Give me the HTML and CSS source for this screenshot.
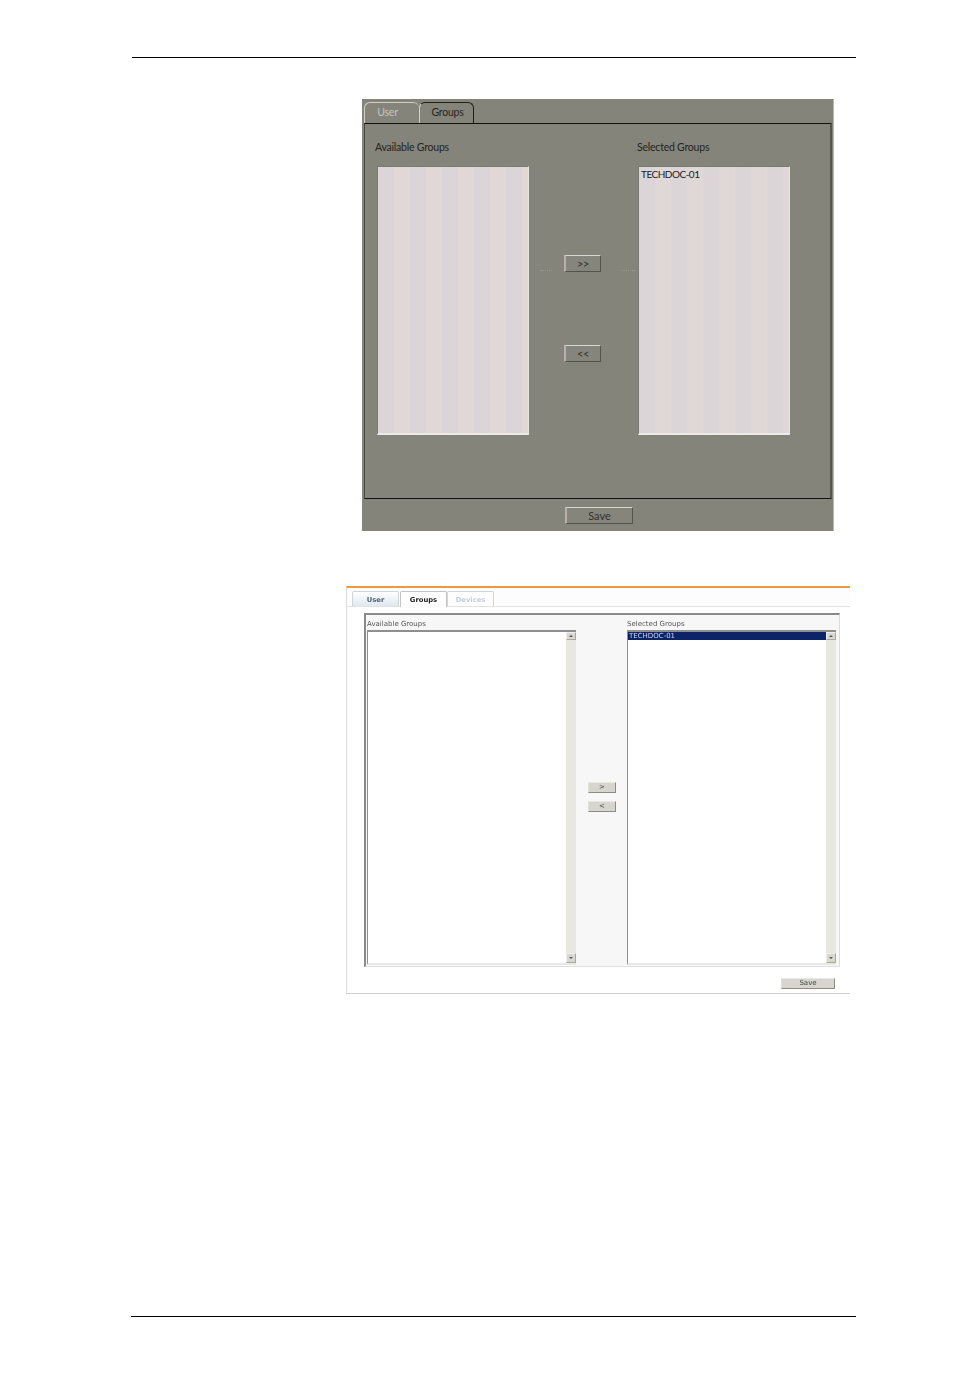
FILE: index.html
```
<!DOCTYPE html>
<html lang="en">
<head>
<meta charset="utf-8">
<title>Groups</title>
<link rel="stylesheet" href="styles.css">
</head>
<body>
<div class="page">
  <hr class="rule rule-top">

  <section class="old">
    <div class="old-tabs">
      <div class="old-tab old-tab-user">User</div>
      <div class="old-tab old-tab-groups">Groups</div>
    </div>
    <div class="old-frame">
      <div class="old-col old-col-left">
        <div class="old-label">Available Groups</div>
        <div class="old-list"></div>
      </div>
      <div class="old-moves">
        <button class="old-btn old-btn-add">&gt;&gt;</button>
        <button class="old-btn">&lt;&lt;</button>
      </div>
      <div class="old-col old-col-right">
        <div class="old-label">Selected Groups</div>
        <div class="old-list">TECHDOC-01</div>
      </div>
    </div>
    <div class="old-foot"><button class="old-btn old-save">Save</button></div>
  </section>

  <section class="new">
    <div class="new-tabs">
      <div class="new-tab new-tab-user">User</div>
      <div class="new-tab new-tab-groups">Groups</div>
      <div class="new-tab new-tab-devices">Devices</div>
    </div>
    <div class="new-frame">
      <div class="new-col">
        <div class="new-label">Available Groups</div>
        <div class="new-list">
          <div class="new-items"></div>
          <div class="sb"><span class="sb-btn sb-up"></span><span class="sb-btn sb-down"></span></div>
        </div>
      </div>
      <div class="new-moves">
        <button class="new-btn">&gt;</button>
        <button class="new-btn">&lt;</button>
      </div>
      <div class="new-col">
        <div class="new-label">Selected Groups</div>
        <div class="new-list">
          <div class="new-items"><div class="new-item-selected">TECHDOC-01</div></div>
          <div class="sb"><span class="sb-btn sb-up"></span><span class="sb-btn sb-down"></span></div>
        </div>
      </div>
    </div>
    <div class="new-foot"><button class="new-btn new-save">Save</button></div>
  </section>

  <hr class="rule rule-bottom">
</div>
</body>
</html>
```
FILE: styles.css
```
* { box-sizing: border-box; }
html, body { margin: 0; padding: 0; background: #fff; }
.page {
  width: 954px; height: 1384px; padding: 57px 98px 67px 131px;
  display: flex; flex-direction: column; overflow: hidden;
  font-family: "Liberation Sans", Arial, sans-serif;
}
.rule { border: 0; height: 1px; margin: 0; background: #000; flex: none; }
.rule-top { margin-left: 1px; }
.rule-bottom { margin-top: auto; }

/* Scanned dark dialog */
.old {
  flex: none; width: 472px; height: 432px; margin: 41px 0 0 231px;
  background: #84847a; color: #24241f; font-family: Lato, "Liberation Sans", sans-serif;
  font-size: 10.5px; letter-spacing: -0.22px;
  border-right: 1px solid #b9b9b2;
}
.old-tabs { display: flex; height: 24px; padding: 3px 0 0 2px; align-items: flex-end; }
.old-tab {
  height: 21px; padding-top: 3px; text-align: center; border-radius: 6px 6px 0 0;
  font-size: 10.5px;
}
.old-tab-user { width: 55px; padding-right: 9px; color: #c5c5bd; border: 1px solid #cfcfc8; border-bottom: 0; border-right: 0; }
.old-tab-groups { width: 55px; padding-left: 2px; color: #26261f; border: 1px solid #1e1e1a; border-bottom: 0; border-left-color: #d2d2cc; }
.old-frame {
  height: 376px; margin: 0 1px 0 2px; padding: 15px 0 0 10px;
  display: flex; border: 1px solid #111; border-left-color: #4a4840; border-right: 2px solid #5a544e;
}
.old-col { flex: none; }
.old-col-left { width: 154px; }
.old-col-right { width: 154px; }
.old-label { height: 27px; line-height: 17px; }
.old-list {
  width: 152px; height: 269px; margin-left: 2px; padding: 1px 2px 0;
  font-size: 10px; line-height: 13px; color: #1a1a1a; letter-spacing: -0.5px;
  border: 1px solid #7c7872; border-bottom: 2px solid #eeeae8; border-right-color: #e8e4e2;
  background: repeating-linear-gradient(90deg, #dcd5d8 0, #dcd5d8 16px, #dfd8d7 16px, #dfd8d7 32px);
}
.old-col-right .old-list { margin-left: 1px; }
.old-moves {
  flex: none; width: 108px; padding: 116px 0 0 35px;
  display: flex; flex-direction: column; gap: 73px; align-items: flex-start;
}
.old-btn {
  display: block; width: 37px; height: 17px; padding: 0; margin: 0;
  font: 11px/14px Lato, "Liberation Sans", sans-serif; color: #33332e; letter-spacing: -0.5px;
  background: #85857c; border: 1px solid #54534c;
  border-top-color: #d8d6d0; border-left: 2px solid #b8aeae;
}
.old-btn-add { position: relative; }
.old-btn-add::before, .old-btn-add::after {
  content: ""; position: absolute; top: 14px; border-top: 1px dotted #9a9a90;
}
.old-btn-add::before { left: -26px; width: 12px; }
.old-btn-add::after { right: -35px; width: 13px; }
.old-foot { padding: 8px 0 0 203px; }
.old-save { width: 68px; height: 17px; font-size: 11px; letter-spacing: 0; }

/* Web dialog */
.new {
  flex: none; width: 504px; height: 408px; margin: 55px 0 0 215px;
  background: #fff; border-top: 2px solid #f0993c;
  border-left: 1px solid #dcdcdc; border-bottom: 1px solid #cfcfcf;
  font-family: "DejaVu Sans", Verdana, sans-serif; font-size: 7px; color: #444;
  filter: blur(0.45px);
}
.new-tabs {
  display: flex; height: 19px; padding: 4px 0 0 5px; background: #fdfdfd;
  border-bottom: 1px solid #e2e2e2; align-items: flex-end;
}
.new-tab {
  height: 15px; width: 47px; line-height: 16px; text-align: center; font-weight: bold;
  border: 1px solid #cfd5da; border-bottom: 0; border-radius: 2px 2px 0 0;
  font-size: 6.8px;
}
.new-tab-user { background: linear-gradient(#fff, #dfe8f0); color: #4c6478; }
.new-tab-groups { margin-left: 1px; background: #fff; color: #222; height: 16px; margin-bottom: -1px; border-color: #c4c4c4; line-height: 17px; }
.new-tab-devices { color: #c6ced6; background: #fdfdfd; }
.new-frame {
  display: flex; width: 476px; height: 354px; margin: 6px 0 0 17px;
  padding: 5px 0 0 1px; background: #f7f7f7;
  border-top: 2px solid #8a8a8a; border-left: 2px solid #8a8a8a;
  border-right: 1px solid #dcdcdc; border-bottom: 1px solid #e0e0e0;
}
.new-col { flex: none; width: 210px; }
.new-label { height: 10px; line-height: 9px; color: #555; }
.new-list {
  display: flex; height: 335px; width: 209px; background: #fff;
  border-style: solid; border-color: #8f8f8f; border-width: 2px 0 2px 1px; border-bottom-color: #e8e8e8;
}
.new-items { flex: 1; min-width: 0; }
.new-item-selected {
  height: 8px; line-height: 8px; padding-left: 1px; background: #0c2368; color: #cfd8f0;
}
.sb {
  flex: none; width: 10px; background: #e8e8e1;
  display: flex; flex-direction: column; justify-content: space-between;
}
.sb-btn {
  display: flex; height: 10px; align-items: center; justify-content: center;
  background: #d8d8d0; border: 1px solid #a8a8a0; border-top-color: #eee; border-left-color: #eee;
}
.sb-up { height: 8px; }
.sb-btn::after { content: ""; border: 2px solid transparent; }
.sb-up::after { border-bottom-color: #555; border-top: 0; }
.sb-down::after { border-top-color: #555; border-bottom: 0; }
.new-moves {
  flex: none; width: 50px; padding: 162px 0 0 11px;
  display: flex; flex-direction: column; gap: 8px; align-items: flex-start;
}
.new-btn {
  display: block; width: 28px; height: 11px; margin: 0; padding: 0;
  font: 7px/9px "DejaVu Sans", Verdana, sans-serif; color: #444;
  background: #d6d6ce; border: 1px solid #8c8c84; border-top-color: #e8e8e4; border-left-color: #e0e0dc;
}
.new-foot { display: flex; justify-content: flex-end; padding: 11px 15px 0 0; }
.new-save { width: 54px; }
```
